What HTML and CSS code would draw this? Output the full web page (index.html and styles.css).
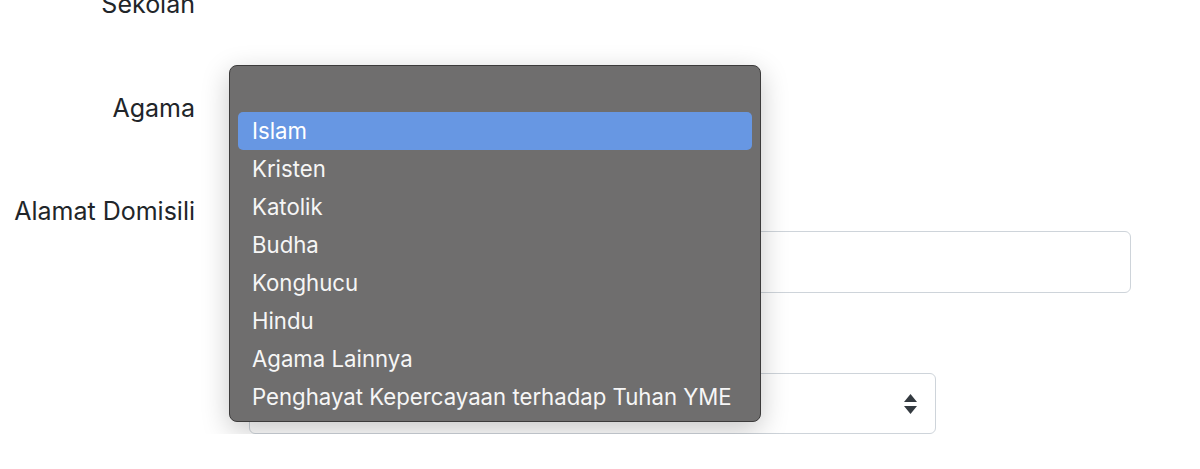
FILE: index.html
```html
<!doctype html>
<html>
<head>
<meta charset="utf-8">
<link rel="stylesheet" href="styles.css">
</head>
<body>
<div class="form">
  <div class="row row-sekolah">
    <label class="label">Sekolah</label>
    <div class="field"></div>
  </div>
  <div class="row row-agama">
    <label class="label">Agama</label>
    <div class="field">
      <!-- the open option list of the Agama select -->
      <ul class="popup">
        <li class="option"></li>
        <li class="option selected">Islam</li>
        <li class="option">Kristen</li>
        <li class="option">Katolik</li>
        <li class="option">Budha</li>
        <li class="option">Konghucu</li>
        <li class="option">Hindu</li>
        <li class="option">Agama Lainnya</li>
        <li class="option">Penghayat Kepercayaan terhadap Tuhan YME</li>
      </ul>
    </div>
  </div>
  <div class="row row-alamat">
    <label class="label">Alamat Domisili</label>
    <div class="field">
      <div class="input"></div>
      <div class="select">
        <svg class="arrows" width="13" height="20" viewBox="0 0 13 20">
          <path d="M6.5 0 L13 8 L0 8 Z" fill="#343a40"/>
          <path d="M0 12 L13 12 L6.5 20 Z" fill="#343a40"/>
        </svg>
      </div>
    </div>
  </div>
</div>
</body>
</html>
```

FILE: styles.css
```css
body {
    margin: 0;
    background: #fff;
    color: #212529;
    font-family: Inter, "Noto Sans", sans-serif;
    overflow: hidden;
}
.form {
    margin-top: -11px;
}
.row {
    display: flex;
}
.label {
    flex: 0 0 195px;
    text-align: right;
    font-size: 25px;
    line-height: 30px;
}
.field {
    position: relative;
    margin-left: 54px;
    width: 882px;
}
.row-sekolah {
    height: 104px;
}
.row-agama {
    height: 103px;
}
.input,
.select {
    box-sizing: border-box;
    border: 1px solid #ced4da;
    border-radius: 6px;
    background: #fff;
}
.input {
    margin-top: 35px;
    height: 62px;
}
.select {
    margin-top: 80px;
    width: 687px;
    height: 61px;
    display: flex;
    align-items: center;
    justify-content: flex-end;
    padding-right: 18px;
}
.popup {
    position: absolute;
    left: -20px;
    top: -28px;
    z-index: 2;
    box-sizing: border-box;
    width: 532px;
    height: 357px;
    margin: 0;
    padding: 8px 8px 0 8px;
    list-style: none;
    background: #6f6e6e;
    border: 1px solid #3c3b3b;
    border-radius: 8px;
    box-shadow: 0 8px 28px rgba(0, 0, 0, 0.22);
}
.option {
    height: 38px;
    padding-left: 14px;
    border-radius: 5px;
    color: #f6f6f6;
    font-size: 22.2px;
    line-height: 38px;
    white-space: nowrap;
}
.option.selected {
    background: #6797e3;
    color: #fff;
}
```
